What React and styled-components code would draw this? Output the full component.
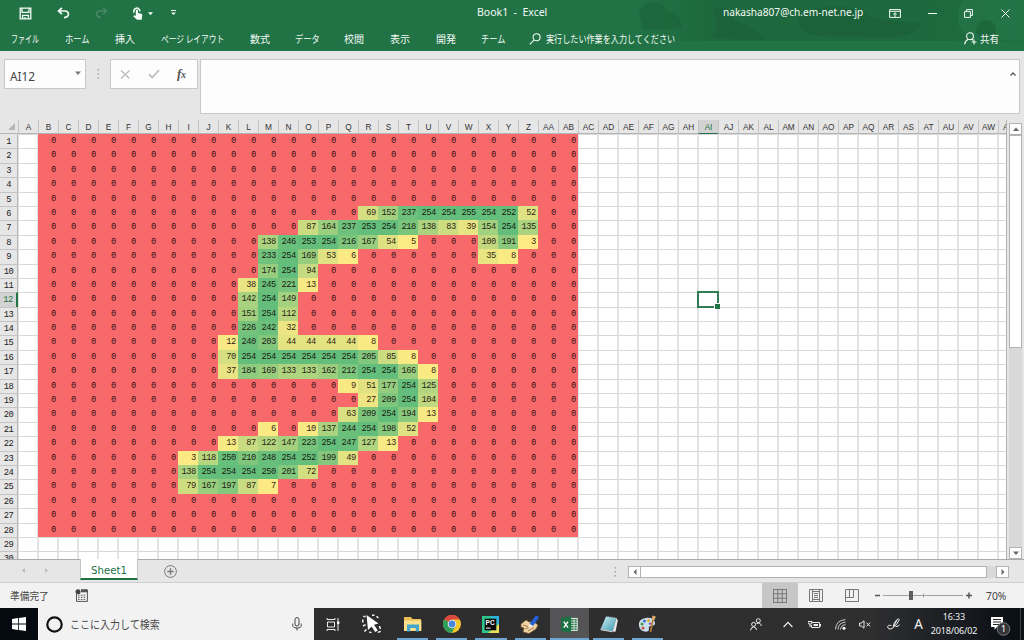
import React from "react";
import styled, { createGlobalStyle, css } from "styled-components";

const GlobalStyle = createGlobalStyle`
  * { box-sizing: border-box; }
  html, body { margin: 0; padding: 0; overflow: hidden; }
  body { font-family: "Noto Sans", "Noto Sans CJK JP", sans-serif; color: #444; }
  svg { display: block; flex: none; }
`;

const GREEN = "#217346";

/* ---------- shared ---------- */
const Squeezed = styled.span`
  display: inline-block;
  white-space: pre;
  transform-origin: ${(p) => p.$origin || "left"} center;
  transform: scaleX(${(p) => p.$x || 1});
`;

const Window = styled.div`
  width: 1024px;
  height: 640px;
  display: flex;
  flex-direction: column;
  background: #e6e6e6;
  overflow: hidden;
`;

/* ---------- title and ribbon ---------- */
const Header = styled.header`
  position: relative;
  height: 51px;
  flex: none;
  background: ${GREEN};
  color: #f4faf6;
`;
const HeaderArt = styled.svg`
  position: absolute;
  right: 0;
  top: 0;
`;
const TitleBar = styled.div`
  position: relative;
  height: 26px;
  display: flex;
  align-items: center;
`;
const QuickAccess = styled.div`
  width: 477px;
  height: 26px;
  display: flex;
  align-items: center;
  padding-left: 19px;
`;
const QuickItem = styled.div`
  width: ${(p) => p.$w}px;
`;
const Title = styled.div`
  width: 246px;
  font-size: 10.5px;
  line-height: 24px;
  height: 26px;
  white-space: pre;
`;
const Account = styled.div`
  width: 166px;
  font-size: 10.6px;
  line-height: 24px;
  height: 26px;
  white-space: nowrap;
`;
const WindowButtons = styled.div`
  display: flex;
  align-items: center;
  height: 24px;
`;
const WindowButton = styled.div`
  width: ${(p) => p.$w}px;
`;
const Ribbon = styled.nav`
  position: relative;
  height: 25px;
  display: flex;
  align-items: center;
  padding-left: 11px;
  font-size: 10px;
  line-height: 25px;
  font-family: "Noto Sans CJK JP", sans-serif;
`;
const Tab = styled.div`
  width: ${(p) => p.$w}px;
  flex: none;
  white-space: nowrap;
  overflow: visible;
`;
const TellMe = styled.div`
  display: flex;
  align-items: center;
  gap: 5px;
  width: 436px;
  flex: none;
`;
const Share = styled.div`
  display: flex;
  align-items: center;
  gap: 3px;
  margin-left: -1px;
`;

/* ---------- formula bar ---------- */
const FormulaBar = styled.div`
  height: 69px;
  flex: none;
  display: flex;
  align-items: flex-start;
  padding: 8px 0 0 4px;
`;
const WhiteBox = styled.div`
  background: #fdfdfd;
  border: 1px solid #c8c8c8;
`;
const NameBox = styled(WhiteBox)`
  width: 82px;
  height: 30px;
  display: flex;
  align-items: center;
  justify-content: space-between;
  padding: 4px 4px 0 5px;
  font-size: 11.8px;
  svg { margin-top: -6px; }
`;
const Grip = styled.div`
  width: 24px;
  display: flex;
  justify-content: center;
  padding-top: 10px;
`;
const FormulaButtons = styled(WhiteBox)`
  width: 88px;
  height: 30px;
  display: flex;
  align-items: center;
  padding-left: 9px;
  gap: 17px;
`;
const Fx = styled.span`
  font: italic bold 13px "Liberation Serif", serif;
  color: #555;
  letter-spacing: -0.3px;
  small { font-size: 10px; }
`;
const FormulaInput = styled(WhiteBox)`
  width: 820px;
  height: 55px;
  margin-left: 2px;
  display: flex;
  justify-content: flex-end;
  padding: 12px 3px 0;
`;

/* ---------- sheet ---------- */
const SheetArea = styled.div`
  height: 440px;
  flex: none;
  display: flex;
  border-bottom: 1px solid #a9a9a9;
`;
const SheetPane = styled.div`
  width: 1007px;
  overflow: hidden;
  border-right: 1px solid #b0b0b0;
`;
const HeadRow = styled.div`
  display: flex;
  width: 1100px;
  height: 14px;
`;
const Corner = styled.div`
  width: 18px;
  flex: none;
  display: flex;
  justify-content: flex-end;
  align-items: flex-end;
  padding: 0 3px 3px 0;
  border-bottom: 1px solid #b4b4b4;
`;
const ColHead = styled.div`
  width: 20px;
  flex: none;
  border-left: 1px solid #c4c4c4;
  border-bottom: 1px solid #b4b4b4;
  font: 8.3px/15px "Liberation Sans", sans-serif;
  color: #333;
  text-align: center;
  white-space: nowrap;
  letter-spacing: -0.1px;
  ${(p) => p.$selected && css`
    background: #d3d3d3;
    color: ${GREEN};
    border-bottom-color: ${GREEN};
  `}
`;
const Row = styled.div`
  display: flex;
  width: 1100px;
  height: 14.4px;
`;
const RowHead = styled.div`
  width: 18px;
  flex: none;
  border-top: 1px solid ${(p) => (p.$first ? "transparent" : "#c4c4c4")};
  border-right: 1px solid #b4b4b4;
  font: 8.8px/14px "Liberation Mono", monospace;
  letter-spacing: -0.6px;
  color: #222;
  text-align: center;
  ${(p) => p.$selected && css`
    background: #d3d3d3;
    color: ${GREEN};
    border-right: 2px solid ${GREEN};
  `}
`;
const Cell = styled.div`
  width: 20px;
  flex: none;
  background: #fff;
  border: 0 solid #e3e3e3;
  border-width: 0 1px;
  border-top: 1px solid #d9d9d9;
`;
const ValueCell = styled.div`
  width: 20px;
  flex: none;
  padding-right: 2.4px;
  background: ${(p) => p.$fill};
  color: rgba(20, 5, 5, 0.9);
  font: 8.8px/15px "Liberation Mono", monospace;
  letter-spacing: -0.6px;
  text-align: right;
`;
const ActiveCell = styled(Cell)`
  position: relative;
  &::before {
    content: "";
    position: absolute;
    inset: -2px -2px -1px -2px;
    border: 2px solid ${GREEN};
    opacity: 0.92;
  }
  &::after {
    content: "";
    position: absolute;
    right: -3px;
    bottom: -2px;
    width: 5px;
    height: 5px;
    background: ${GREEN};
    border: solid #fff;
    border-width: 1px 0 0 1px;
  }
`;
const VerticalScroll = styled.div`
  width: 17px;
  padding: 3px 2px 0;
  display: flex;
  flex-direction: column;
`;
const ScrollButton = styled.div`
  width: 13px;
  height: 12px;
  flex: none;
  background: #fdfdfd;
  border: 1px solid #b2b2b2;
  display: flex;
  align-items: center;
  justify-content: center;
`;
const VerticalThumb = styled.div`
  height: 214px;
  background: #fff;
  border: 1px solid #b2b2b2;
`;
const VerticalTrack = styled.div`
  height: 200px;
  background: #d9d9d9;
`;

/* ---------- sheet tabs and status ---------- */
const SheetTabs = styled.div`
  height: 23px;
  flex: none;
  display: flex;
  border-bottom: 1px solid #cfcfcf;
`;
const TabArrows = styled.div`
  width: 80px;
  display: flex;
  align-items: center;
  padding: 0 0 2px 21px;
  gap: 18px;
`;
const SheetTab = styled.div`
  width: 58px;
  margin-top: -1px;
  height: 21px;
  background: #fff;
  border: 1px solid #c4c4c4;
  border-top: 0;
  border-bottom: 2px solid ${GREEN};
  color: ${GREEN};
  font: 10.2px/23px "DejaVu Sans", sans-serif;
  text-align: center;
`;
const AddSheet = styled.div`
  width: 476px;
  padding: 5px 0 0 26px;
`;
const TabGrip = styled.div`
  width: 14px;
  padding-top: 7px;
`;
const HorizontalScroll = styled.div`
  width: 381px;
  height: 12px;
  margin-top: 6px;
  display: flex;
  background: #d9d9d9;
`;
const HorizontalThumb = styled.div`
  width: 347px;
  margin-left: -1px;
  margin-right: auto;
  background: #fff;
  border: 1px solid #b2b2b2;
`;
const StatusBar = styled.div`
  height: 25px;
  flex: none;
  display: flex;
  align-items: center;
  background: #f2f2f2;
  font-size: 10px;
`;
const Ready = styled.div`
  width: 75px;
  padding-left: 10px;
  white-space: nowrap;
`;
const StatusIcon = styled.div`
  width: 687px;
`;
const ViewButton = styled.div`
  width: 36px;
  height: 25px;
  display: flex;
  align-items: center;
  justify-content: center;
  background: ${(p) => (p.$active ? "#c6c6c6" : "transparent")};
`;
const ZoomArea = styled.div`
  display: flex;
  align-items: center;
  padding-left: 5px;
  gap: 13px;
`;

/* ---------- taskbar ---------- */
const Taskbar = styled.footer`
  height: 32px;
  flex: none;
  display: flex;
  background: linear-gradient(90deg, #2c2c2e 0, #2f2f30 870px, #0b1017 1012px);
  color: #f2f2f2;
`;
const Start = styled.div`
  width: 38px;
  display: flex;
  align-items: center;
  justify-content: center;
  background: #050a11;
`;
const Search = styled.div`
  width: 276px;
  display: flex;
  align-items: center;
  padding: 0 12px 0 8px;
  background: #f2f2f2;
  color: #4a4a4a;
  font-size: 11.5px;
`;
const SearchText = styled.div`
  flex: 1;
  padding-left: 7px;
  white-space: nowrap;
`;
const AppButton = styled.div`
  width: ${(p) => p.$w || 39.2}px;
  flex: none;
  display: flex;
  align-items: center;
  justify-content: center;
  position: relative;
  background: ${(p) => (p.$active ? "#545456" : "transparent")};
  ${(p) => p.$open && css`
    &::after {
      content: "";
      position: absolute;
      bottom: 0;
      left: ${p.$active ? 0 : 4}px;
      right: ${p.$active ? 0 : 4}px;
      height: 2px;
      background: #6ea6d4;
    }
  `}
`;
const Tray = styled.div`
  margin-left: auto;
  display: flex;
  align-items: center;
`;
const TrayItem = styled.div`
  width: ${(p) => p.$w}px;
  display: flex;
  justify-content: center;
`;
const ImeMode = styled.span`
  font: 13.5px/32px "Noto Sans", sans-serif;
`;
const Clock = styled.div`
  width: 54px;
  font-size: 9px;
  line-height: 14px;
  text-align: center;
  letter-spacing: -0.15px;
  white-space: nowrap;
`;
const Notifications = styled.div`
  width: 37px;
  height: 32px;
  padding: 8px 0 0 6px;
  border-right: 1px solid #3a3e44;
  margin-right: 3px;
`;

/* ---------- data ---------- */
const colName = (i) => (i < 26 ? "" : "A") + String.fromCharCode(65 + (i % 26));
const COLUMNS = Array.from({ length: 50 }, (_, i) => colName(i));
const RUNS = {
  6: [["R", 69, 152, 237, 254, 254, 255, 254, 252, 52]],
  7: [["O", 87, 164, 237, 253, 254, 218, 138, 83, 39, 154, 254, 135]],
  8: [["M", 138, 246, 253, 254, 216, 167, 54, 5], ["X", 100, 191, 3]],
  9: [["M", 233, 254, 169, 53, 6], ["X", 35, 8]],
  10: [["M", 174, 254, 94]],
  11: [["L", 38, 245, 221, 13]],
  12: [["L", 142, 254, 149]],
  13: [["L", 151, 254, 112]],
  14: [["L", 226, 242, 32]],
  15: [["K", 12, 240, 203, 44, 44, 44, 44, 8]],
  16: [["K", 70, 254, 254, 254, 254, 254, 254, 205, 85, 8]],
  17: [["K", 37, 184, 169, 133, 133, 162, 212, 254, 254, 166, 8]],
  18: [["Q", 9, 51, 177, 254, 125]],
  19: [["R", 27, 209, 254, 104]],
  20: [["Q", 63, 209, 254, 194, 13]],
  21: [["M", 6, 0, 10, 137, 244, 254, 198, 52]],
  22: [["K", 13, 87, 122, 147, 223, 254, 247, 127, 13]],
  23: [["I", 3, 118, 250, 210, 248, 254, 252, 199, 49]],
  24: [["I", 138, 254, 254, 254, 250, 201, 72]],
  25: [["I", 79, 167, 197, 87, 7]],
};
const valueAt = (row, col) => {
  for (const [start, ...values] of RUNS[row] || []) {
    const v = values[col - COLUMNS.indexOf(start)];
    if (v !== undefined) return v;
  }
  return 0;
};
const LOW = [255, 235, 132];
const HIGH = [99, 190, 123];
const fillFor = (v) =>
  v === 0
    ? "#f8696b"
    : `rgb(${LOW.map((c, i) => Math.round(c + ((HIGH[i] - c) * v) / 255)).join(",")})`;

const TABS = [
  ["ファイル", 54, 0.7],
  ["ホーム", 50, 0.83],
  ["挿入", 46, 1],
  ["ページ レイアウト", 89, 0.77],
  ["数式", 45, 1],
  ["データ", 49, 0.82],
  ["校閲", 46, 1],
  ["表示", 46, 1],
  ["開発", 45, 1],
  ["チーム", 48, 0.82],
];

const Arrow = ({ dir, color = "#666", size = 6 }) => {
  const d = {
    up: "M0 5 L3 1.5 L6 5Z",
    down: "M0 1.5 L6 1.5 L3 5Z",
    left: "M4.5 0 L4.5 6 L1.5 3Z",
    right: "M1.5 0 L4.5 3 L1.5 6Z",
  }[dir];
  return <svg width={size} height={size} viewBox="0 0 6 6"><path d={d} fill={color} /></svg>;
};
const Dots = () => (
  <svg width="3" height="10" viewBox="0 0 3 10" fill="#aaa">
    <rect x=".5" y="0" width="1.6" height="1.6" /><rect x=".5" y="4" width="1.6" height="1.6" /><rect x=".5" y="8" width="1.6" height="1.6" />
  </svg>
);

function TopBar() {
  return (
    <Header>
      <HeaderArt width="390" height="51" viewBox="0 0 390 51">
        <defs>
          <linearGradient id="shade" x1="0" x2="1" y1="0" y2="0">
            <stop offset="0" stopColor="#1c643a" stopOpacity="0" />
            <stop offset=".2" stopColor="#1c643a" stopOpacity=".7" />
            <stop offset=".75" stopColor="#1c643a" stopOpacity=".7" />
            <stop offset="1" stopColor="#1c643a" stopOpacity=".35" />
          </linearGradient>
        </defs>
        <rect width="390" height="41" fill="url(#shade)" />
        <path d="M5 14 Q8 2 20 2 Q31 2 33 12 Q46 12 48 28 L8 30 Q8 24 5 14Z" fill="#1d623b" opacity=".6" />
        <path d="M78 9 Q96 4 100 20 Q118 26 132 40 Q90 40 76 36 Q88 30 78 9Z" fill="#1a5c36" opacity=".5" />
        <path d="M165 16 Q205 -4 240 18 Q270 24 288 22 Q282 38 250 37 L186 36 Q160 34 165 16Z" fill="#1a5c36" opacity=".5" />
        <path d="M328 0 H390 V40 H338 Q316 28 328 0Z" fill="#257a4b" opacity=".5" />
        <circle cx="352" cy="30" r="10" fill="#1b6339" opacity=".7" />
      </HeaderArt>
      <TitleBar>
        <QuickAccess>
          <QuickItem $w={38}>
            <svg width="13" height="13" viewBox="0 0 13 13" fill="none" stroke="#f4faf6" strokeWidth="1.3">
              <path d="M1.2 1.2H11.8V11.8H1.2Z M3 1.5V5.4H10V1.5 M3.6 11.5V8.4H9.4V11.5" /><path d="M6 10V12" strokeWidth="1.4" />
            </svg>
          </QuickItem>
          <QuickItem $w={38}>
            <svg width="13" height="12" viewBox="0 0 13 12" fill="none" stroke="#f4faf6" strokeWidth="1.7">
              <path d="M5 .8 L1.5 4 L5 7.2 M1.7 4H8 Q11.5 4.2 11.4 7.4 Q11.2 10.2 7 10.6" />
            </svg>
          </QuickItem>
          <QuickItem $w={38}>
            <svg width="13" height="12" viewBox="0 0 13 12" fill="none" stroke="#4b8a64" strokeWidth="1.5">
              <path d="M8 .8 L11.5 4 L8 7.2 M11.3 4H5 Q1.5 4.2 1.6 7.4 Q1.8 10.2 6 10.6" />
            </svg>
          </QuickItem>
          <QuickItem $w={15}>
            <svg width="10" height="13" viewBox="0 0 10 13">
              <path d="M1.2 5.6A3 3 0 1 1 6.8 4.4" fill="none" stroke="#f4faf6" strokeWidth="1.5" />
              <path d="M2.8 3.4Q2.8 2.4 3.9 2.4Q5 2.4 5 3.4V6L8.2 6.8Q9.4 7.1 9.2 8.5L8.7 12.8H4L.4 9.4Q.6 8.1 1.9 8.4L2.8 8.9Z" fill="#f4faf6" />
            </svg>
          </QuickItem>
          <QuickItem $w={23}><Arrow dir="down" color="#f4faf6" size={5} /></QuickItem>
          <QuickItem $w={10}>
            <svg width="5" height="6" viewBox="0 0 5 6" fill="#f4faf6"><rect width="5" height="1" /><path d="M0 2.5H5L2.5 5Z" /></svg>
          </QuickItem>
        </QuickAccess>
        <Title>Book1  -  Excel</Title>
        <Account><Squeezed $x={0.955}>nakasha807@ch.em-net.ne.jp</Squeezed></Account>
        <WindowButtons>
          <WindowButton $w={39}>
            <svg width="12" height="9" viewBox="0 0 12 9" fill="none" stroke="#f4faf6"><path d="M.6 .6H11.4V8.4H.6Z M.6 2.3H11.4 M6 8V4 M4.2 5.4L6 3.8L7.8 5.4" /></svg>
          </WindowButton>
          <WindowButton $w={36}><svg width="9" height="3" viewBox="0 0 9 3"><path d="M0 1.5H9" stroke="#f4faf6" /></svg></WindowButton>
          <WindowButton $w={37}>
            <svg width="9" height="9" viewBox="0 0 9 9" fill="none" stroke="#f4faf6"><path d="M.6 2.6H6.4V8.4H.6Z M2.5 2.5V.6H8.4V6.5H6.5" /></svg>
          </WindowButton>
          <WindowButton $w={10}><svg width="9" height="9" viewBox="0 0 9 9"><path d="M.5 .5L8.5 8.5M8.5 .5L.5 8.5" stroke="#f4faf6" /></svg></WindowButton>
        </WindowButtons>
      </TitleBar>
      <Ribbon>
        {TABS.map(([label, w, x]) => (
          <Tab key={label} $w={w}><Squeezed $x={x}>{label}</Squeezed></Tab>
        ))}
        <TellMe>
          <svg width="12" height="12" viewBox="0 0 12 12" fill="none" stroke="#f4faf6" strokeWidth="1.1"><circle cx="7.6" cy="4.2" r="3.5" /><path d="M5.2 6.8L.8 11.4" /></svg>
          <Squeezed $x={0.81}>実行したい作業を入力してください</Squeezed>
        </TellMe>
        <Share>
          <svg width="13" height="13" viewBox="0 0 13 13" fill="none" stroke="#f4faf6" strokeWidth="1.1">
            <circle cx="6" cy="4.2" r="3.4" /><path d="M.6 12.4Q1 8.8 4.2 7.2M7.6 7.2L9 8.2M10 7.6V12.4M7.6 10H12.4" />
          </svg>
          <Squeezed $x={0.95}>共有</Squeezed>
        </Share>
      </Ribbon>
    </Header>
  );
}

function Sheet() {
  return (
    <SheetArea>
      <SheetPane>
        <HeadRow>
          <Corner><svg width="7" height="7" viewBox="0 0 7 7"><path d="M7 0V7H0Z" fill="#b5b5b5" /></svg></Corner>
          {COLUMNS.map((c) => <ColHead key={c} $selected={c === "AI"}>{c}</ColHead>)}
        </HeadRow>
        {Array.from({ length: 30 }, (_, r) => r + 1).map((row) => (
          <Row key={row}>
            <RowHead $first={row === 1} $selected={row === 12}>{row}</RowHead>
            {COLUMNS.map((c, i) => {
              if (row <= 28 && i >= 1 && i <= 27) {
                const v = valueAt(row, i);
                return <ValueCell key={c} $fill={fillFor(v)}>{v}</ValueCell>;
              }
              return row === 12 && c === "AI" ? <ActiveCell key={c} /> : <Cell key={c} />;
            })}
          </Row>
        ))}
      </SheetPane>
      <VerticalScroll>
        <ScrollButton><Arrow dir="up" /></ScrollButton>
        <VerticalThumb />
        <VerticalTrack />
        <ScrollButton><Arrow dir="down" /></ScrollButton>
      </VerticalScroll>
    </SheetArea>
  );
}

const FolderIcon = () => (
  <svg width="18" height="16" viewBox="0 0 18 16">
    <path d="M0 1H7L8.5 3H17V15H0Z" fill="#e9bf55" /><path d="M0 4.5H17.4V15H0Z" fill="#fbe08b" />
    <path d="M3 8.5H15V15.5H11.8V12H6.2V15.5H3Z" fill="#42a6cf" />
  </svg>
);
const ChromeIcon = () => (
  <svg width="18" height="18" viewBox="0 0 18 18">
    <circle cx="9" cy="9" r="9" fill="#f4c72d" />
    <path d="M9 9L1.2 4.5A9 9 0 0 1 16.8 4.5H9Z" fill="#dc4a3d" />
    <path d="M1.2 4.5A9 9 0 0 0 8.6 18L12.6 11L9 9Z" fill="#2f9e58" />
    <circle cx="9" cy="9" r="4.3" fill="#f4f4f4" /><circle cx="9" cy="9" r="3.4" fill="#4a86dc" />
  </svg>
);
const PyCharmIcon = () => (
  <svg width="17" height="17" viewBox="0 0 17 17">
    <rect width="17" height="17" fill="#2fc58b" /><path d="M8 0H17V10Z" fill="#2db4d8" /><path d="M17 8V17H6Z" fill="#e8e05a" />
    <rect x="2.7" y="2.7" width="11.6" height="11.6" fill="#0a0a0a" />
    <text x="3.6" y="9" fontFamily="Liberation Sans, sans-serif" fontWeight="bold" fontSize="6.5" fill="#fff">PC</text>
    <rect x="4" y="11.6" width="4.6" height="1" fill="#fff" />
  </svg>
);
const HandPenIcon = () => (
  <svg width="20" height="19" viewBox="0 0 20 19">
    <path d="M1 9L6 5L9 7L14 7L18 10L16 14L9 18.5L3 17L4 13L1 12Z" fill="#f0d3a4" stroke="#7a552c" strokeWidth=".7" />
    <path d="M3 10L8 11.5M5 14L10 12M8 16L14 12.5" stroke="#8a6537" strokeWidth=".8" />
    <path d="M9.5 9L15.5 1Q18 0 19 2.5L13 11Z" fill="#2460d8" /><path d="M9.5 9L13 11L8.5 13Z" fill="#f2f2f2" />
  </svg>
);
const ExcelIcon = () => (
  <svg width="17" height="17" viewBox="0 0 17 17">
    <rect x="8" y="2.4" width="8.2" height="12" fill="#2a7849" stroke="#e5f0e9" strokeWidth="1" />
    <path d="M10 5H16M10 7.3H16M10 9.6H16M10 12H16M13 2.6V14" stroke="#e5f0e9" strokeWidth=".8" />
    <path d="M0 2L10 .3V16.7L0 15Z" fill="#1c7044" />
    <path d="M2.8 5.6L7 11.6M7 5.6L2.8 11.6" stroke="#fff" strokeWidth="1.4" />
  </svg>
);
const NotepadIcon = () => (
  <svg width="18" height="18" viewBox="0 0 18 18">
    <defs><linearGradient id="pad" x1="0" y1="0" x2="1" y2="1"><stop offset="0" stopColor="#d5f2f5" /><stop offset="1" stopColor="#3596ae" /></linearGradient></defs>
    <path d="M6 1.5L16.5 3L12.5 16.5L.6 14Z" fill="url(#pad)" /><path d="M16.5 3L17.8 5.5L15.5 16.8L12.5 16.5Z" fill="#e8e8e8" />
    <path d="M.6 14L12.5 16.2V17.3L.6 15.2Z" fill="#ddd" /><path d="M6 1.3L16.5 2.8" stroke="#7a8b92" strokeDasharray="1 1" />
  </svg>
);
const PaintIcon = () => (
  <svg width="19" height="18" viewBox="0 0 19 18">
    <path d="M1 11Q0 4 7.5 3Q16 2 17 8Q17.5 11 12 11Q10 12 11 14Q11 17 7 16.6Q2 16 1 11Z" fill="#c9dfee" />
    <circle cx="4" cy="9" r="1.6" fill="#4a9d46" /><circle cx="6.5" cy="6" r="1.5" fill="#3c70cf" /><circle cx="10.5" cy="5.4" r="1.5" fill="#e0b42e" />
    <circle cx="5" cy="13" r="1.5" fill="#d24a38" /><circle cx="12" cy="8.6" r="1.2" fill="#8b4bb5" />
    <path d="M12.5 17L15 4" stroke="#b9783c" strokeWidth="1.7" /><path d="M13.8 4.5L14.5 .5L17.8 1.4L16.4 5Z" fill="#e3b06e" />
  </svg>
);
const ClickIcon = () => (
  <svg width="20" height="20" viewBox="0 0 20 20">
    <path d="M4.5 1L16.5 9.6L12 10.8L15.8 16.4L13.2 18L9.6 12.6L6 16Z" fill="#fff" />
    <path d="M1.2 2.4L3.6 2.4M.8 5.5V8.5M1 12L3.6 10.6M10 1.2H12.5M14.5 2.2L16.4 4M2.4 17.6L4.5 15.4M17.4 12L18.4 15M15.8 18.4L18.8 17.4M7.3 18L9.5 18.6" stroke="#f2f2f2" strokeWidth="1.5" />
  </svg>
);

function Bottom() {
  return (
    <>
      <SheetTabs>
        <TabArrows><Arrow dir="left" color="#b4b4b4" size={5} /><Arrow dir="right" color="#b4b4b4" size={5} /></TabArrows>
        <SheetTab>Sheet1</SheetTab>
        <AddSheet>
          <svg width="13" height="13" viewBox="0 0 13 13" fill="none" stroke="#7a7a7a"><circle cx="6.5" cy="6.5" r="5.9" /><path d="M6.5 3.3V9.7M3.3 6.5H9.7" strokeWidth="1.4" /></svg>
        </AddSheet>
        <TabGrip><Dots /></TabGrip>
        <HorizontalScroll>
          <ScrollButton><Arrow dir="left" /></ScrollButton>
          <HorizontalThumb />
          <ScrollButton><Arrow dir="right" /></ScrollButton>
        </HorizontalScroll>
      </SheetTabs>
      <StatusBar>
        <Ready><Squeezed $x={0.97}>準備完了</Squeezed></Ready>
        <StatusIcon>
          <svg width="13" height="13" viewBox="0 0 13 13" fill="none" stroke="#555">
            <path d="M1.5 5V12.4H12.4V.8H6" /><path d="M6 2H12.4" strokeWidth="2.6" /><circle cx="3" cy="2.7" r="2.5" fill="#444" stroke="none" />
            <path d="M3 6.2H11M3 8.3H11M3 10.4H11" strokeDasharray="1.6 1.2" />
          </svg>
        </StatusIcon>
        <ViewButton $active>
          <svg width="14" height="14" viewBox="0 0 14 14" fill="none" stroke="#777"><path d="M.5 .5H13.5V13.5H.5ZM.5 4.8H13.5M.5 9.2H13.5M4.8 .5V13.5M9.2 .5V13.5" /></svg>
        </ViewButton>
        <ViewButton>
          <svg width="14" height="13" viewBox="0 0 14 13" fill="none" stroke="#777"><path d="M.5 .5H13.5V12.5H.5ZM3.5 .5V12.5M10.5 .5V12.5M3.5 2.5H10.5V10.5H3.5M5 4.5H9M5 6.5H9M5 8.5H9" /></svg>
        </ViewButton>
        <ViewButton>
          <svg width="14" height="13" viewBox="0 0 14 13" fill="none" stroke="#777"><path d="M.5 .5H13.5V12.5H.5ZM.5 8.5H8.5V.5M4.5 .5V8.5" /></svg>
        </ViewButton>
        <ZoomArea>
          <svg width="98" height="11" viewBox="0 0 98 11" fill="none" stroke="#555">
            <path d="M0 5.5H5M91 5.5H97M94 2.5V8.5" strokeWidth="1.5" /><path d="M8 5.5H88M48.5 3.5V7.5" stroke="#a0a0a0" /><rect x="34" y="1" width="4" height="9" fill="#5f5f5f" stroke="none" />
          </svg>
          <Squeezed $x={1.03}>70%</Squeezed>
        </ZoomArea>
      </StatusBar>
      <Taskbar>
        <Start><svg width="14" height="14" viewBox="0 0 14 14" fill="#fff"><path d="M0 2L6 1.1V6.6H0ZM6.8 1L14 0V6.6H6.8ZM0 7.4H6V12.9L0 12ZM6.8 7.4H14V14L6.8 13Z" /></svg></Start>
        <Search>
          <svg width="17" height="17" viewBox="0 0 17 17"><circle cx="8.5" cy="8.5" r="7.2" fill="none" stroke="#111" strokeWidth="2.2" /></svg>
          <SearchText><Squeezed $x={0.87}>ここに入力して検索</Squeezed></SearchText>
          <svg width="10" height="14" viewBox="0 0 10 14" fill="none" stroke="#444"><rect x="3" y=".6" width="4" height="8.4" rx="2" /><path d="M.8 6.5V8.5Q.8 11 5 11Q9.2 11 9.2 8.5V6.5M5 11V13.5" /></svg>
        </Search>
        <AppButton $w={37}>
          <svg width="14" height="13" viewBox="0 0 14 13" fill="none" stroke="#eee"><path d="M1 0V1.5H9V0M1.5 4H8.5V9H1.5ZM1 13V11.5H9V13M12 0V13" /><rect x="11" y="3.5" width="2.4" height="2.4" fill="#fff" stroke="none" /></svg>
        </AppButton>
        <AppButton $w={42}><ClickIcon /></AppButton>
        <AppButton $open><FolderIcon /></AppButton>
        <AppButton $open><ChromeIcon /></AppButton>
        <AppButton $open><PyCharmIcon /></AppButton>
        <AppButton $open><HandPenIcon /></AppButton>
        <AppButton $open $active><ExcelIcon /></AppButton>
        <AppButton $open><NotepadIcon /></AppButton>
        <AppButton $open><PaintIcon /></AppButton>
        <Tray>
          <TrayItem $w={32}>
            <svg width="12" height="13" viewBox="0 0 12 13" fill="none" stroke="#eee"><circle cx="8.3" cy="2.7" r="2" /><circle cx="3.6" cy="6.4" r="2" /><path d="M.6 12.5Q.8 9 3.6 9Q6.2 9 6.6 12M6.6 5.6Q10.6 4 11.4 8" /></svg>
          </TrayItem>
          <TrayItem $w={32}><svg width="10" height="7" viewBox="0 0 10 7"><path d="M.6 6L5 1.4L9.4 6" fill="none" stroke="#eee" strokeWidth="1.2" /></svg></TrayItem>
          <TrayItem $w={20}>
            <svg width="13" height="9" viewBox="0 0 13 9" fill="none" stroke="#eee"><path d="M3.5 2.5H11.5V7.5H3.5V5M12.5 4V6.5" /><rect x="5.5" y="4" width="4.5" height="2" fill="#eee" stroke="none" /><path d="M0 1.5H4V3Q4 4 2 4Q0 4 0 3ZM2 4V7" /></svg>
          </TrayItem>
          <TrayItem $w={32}>
            <svg width="11" height="11" viewBox="0 0 11 11" fill="none" stroke="#ccc"><path d="M.5 10.5Q1 1 10.5 .7M3 10.5Q3.4 3.6 10.5 3.2M5.5 10.5Q6 6 10.5 5.7" /><circle cx="9" cy="9.2" r="1.5" fill="#fff" stroke="none" /></svg>
          </TrayItem>
          <TrayItem $w={17}>
            <svg width="12" height="9" viewBox="0 0 12 9" fill="none" stroke="#eee"><path d="M.6 3H2.4L5 .8V8.2L2.4 6H.6ZM7.4 2.6L11.2 6.4M11.2 2.6L7.4 6.4" /></svg>
          </TrayItem>
          <TrayItem $w={40}>
            <svg width="13" height="12" viewBox="0 0 13 12" fill="none" stroke="#eee"><path d="M4.4 7.5Q.5 6.6.7 9.2Q1 11.4 4 11Q7 10.5 8 5.8L10.4 1.2Q11.8.2 12.3 1.8L9.5 6.5L6.3 8.8L7.2 5.2L9.7 1.8M8.6 8.6Q12 8.6 12.4 6.6" /></svg>
          </TrayItem>
          <TrayItem $w={11}><ImeMode>A</ImeMode></TrayItem>
          <TrayItem $w={60}>
            <Clock>16:33<br />2018/06/02</Clock>
          </TrayItem>
          <Notifications>
            <svg width="21" height="21" viewBox="0 0 21 21">
              <path d="M1 1H13V11H7L4.5 13.5V11H1Z" fill="#fff" /><path d="M3 3.5H11M3 6H11M3 8.5H9" stroke="#222" />
              <circle cx="13.5" cy="13" r="6.3" fill="#333538" stroke="#777" />
              <text x="13.5" y="16.4" textAnchor="middle" fontFamily="Noto Sans, sans-serif" fontSize="9.5" fill="#fff">1</text>
            </svg>
          </Notifications>
        </Tray>
      </Taskbar>
    </>
  );
}

export default function App() {
  return (
    <>
      <GlobalStyle />
      <Window>
        <TopBar />
        <FormulaBar>
          <NameBox><span>AI12</span><Arrow dir="down" color="#777" /></NameBox>
          <Grip><Dots /></Grip>
          <FormulaButtons>
            <svg width="11" height="11" viewBox="0 0 11 11"><path d="M1 1.5L9.5 9.5M9.5 1.5L1 9.5" stroke="#bdbdbd" strokeWidth="1.4" /></svg>
            <svg width="12" height="10" viewBox="0 0 12 10"><path d="M1 5.4L4.2 8.5L11 1" fill="none" stroke="#bdbdbd" strokeWidth="1.8" /></svg>
            <Fx>f<small>x</small></Fx>
          </FormulaButtons>
          <FormulaInput><svg width="6" height="4" viewBox="0 0 6 4"><path d="M.5 3.5L3 1L5.5 3.5" fill="none" stroke="#555" strokeWidth="1.3" /></svg></FormulaInput>
        </FormulaBar>
        <Sheet />
        <Bottom />
      </Window>
    </>
  );
}
